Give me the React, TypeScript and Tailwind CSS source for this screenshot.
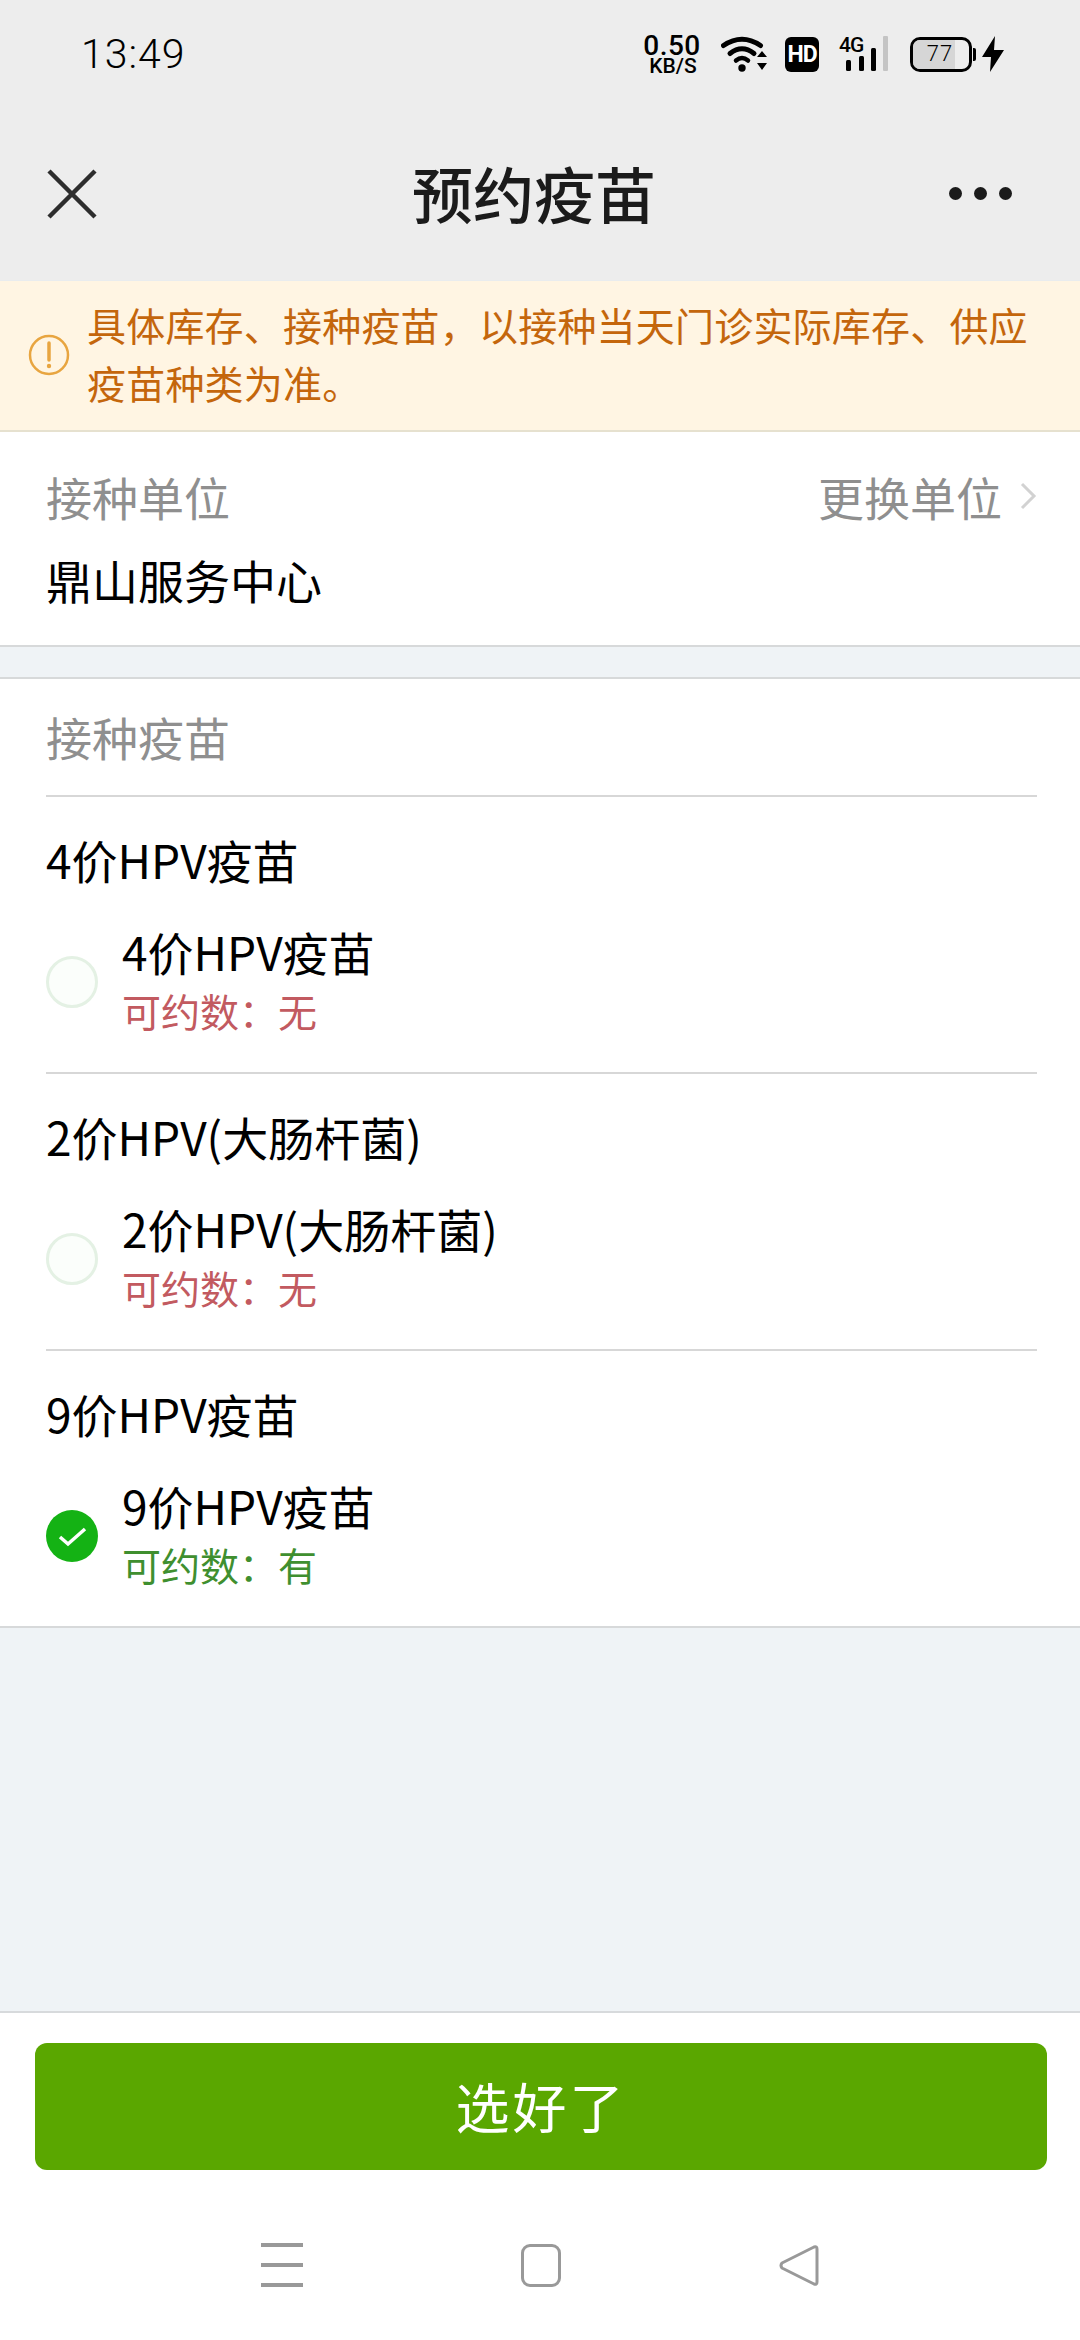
const cjk = "font-['Noto_Sans_CJK_SC','Noto_Sans',sans-serif]"

const VACCINES = [
  { title: "4价HPV疫苗", name: "4价HPV疫苗", available: false },
  { title: "2价HPV(大肠杆菌)", name: "2价HPV(大肠杆菌)", available: false },
  { title: "9价HPV疫苗", name: "9价HPV疫苗", available: true },
]

function StatusBar() {
  return (
    <div className="flex h-[108px] items-center pl-[81px] pr-[76px] text-black">
      <span className="pt-[1px] font-['Roboto',sans-serif] text-[41px] font-light leading-none tracking-[1px]">13:49</span>
      <div className="ml-auto flex items-center">
        <div className="flex w-[60px] flex-col items-center font-['Roboto',sans-serif] font-medium leading-none">
          <span className="text-[28px] leading-[25px] tracking-[0.5px]">0.50</span>
          <span className="pl-[2px] text-[21px] leading-[17px]">KB/S</span>
        </div>
        <svg className="ml-[19px]" width="47" height="36" viewBox="0 0 47 36">
          <path d="M2.5 9.5 Q21 -3 39.5 9.5" fill="none" stroke="#000" strokeWidth="5" strokeLinecap="round" />
          <path d="M9 17.5 Q21 8 33 17.5" fill="none" stroke="#000" strokeWidth="5" strokeLinecap="round" />
          <path d="M15 24.5 Q21 19.5 27 24.5" fill="none" stroke="#000" strokeWidth="4.5" strokeLinecap="round" />
          <circle cx="21" cy="32" r="3.7" fill="#000" />
          <path d="M36 21 L41 15 L46 21 Z M36 27 L41 34 L46 27 Z" fill="#000" />
        </svg>
        <div className="ml-[17px] flex h-[35px] w-[34px] items-center justify-center rounded-[6px] bg-black font-['Roboto',sans-serif] text-[23px] font-bold leading-none tracking-[-1px] text-white">
          HD
        </div>
        <div className="relative ml-[20px] h-[36px] w-[50px]">
          <span className="absolute left-0 top-[-3px] font-['Roboto',sans-serif] text-[21px] font-medium leading-[24px] tracking-[-1px]">4G</span>
          <svg width="50" height="36" viewBox="0 0 50 36">
            <rect x="7" y="24" width="5" height="11" rx="1.5" fill="#000" />
            <rect x="20" y="20" width="5" height="15" rx="1.5" fill="#000" />
            <rect x="32" y="12" width="5" height="23" rx="1.5" fill="#000" />
            <rect x="44" y="0" width="5" height="35" rx="1" fill="#c4c4c4" />
          </svg>
        </div>
        <div className="relative ml-[21px] h-[35px] w-[62px] overflow-hidden rounded-[10px] border-[3px] border-black">
          <div className="h-full w-[75%] bg-[#d6d6d6]" />
          <span className="absolute inset-0 flex items-center justify-center pr-[2px] font-['Roboto',sans-serif] text-[22px] font-light leading-none tracking-[1px] text-black">77</span>
        </div>
        <div className="ml-[1px] h-[13px] w-[3px] rounded-r-[2px] bg-black" />
        <svg className="ml-[6px]" width="22" height="36" viewBox="0 0 22 36">
          <path d="M13 0 L0 21 L9 21 L8 36 L22 14 L12 14 Z" fill="#000" />
        </svg>
      </div>
    </div>
  )
}

function NavBar() {
  return (
    <div className="relative flex h-[172px] items-start justify-between pl-[47px] pr-[68px] pt-[61px]">
      <svg width="50" height="50" viewBox="0 0 50 50">
        <path d="M2 2 L48 48 M48 2 L2 48" stroke="#2d2d2d" strokeWidth="4.5" />
      </svg>
      <h1 className={`absolute left-[412px] top-[50px] text-[61px] font-medium leading-[70px] text-[#1b1b1b] ${cjk}`}>预约疫苗</h1>
      <div className="mt-[18px] flex gap-[12px]">
        <span className="size-[13px] rounded-full bg-[#1b1b1b]" />
        <span className="size-[13px] rounded-full bg-[#1b1b1b]" />
        <span className="size-[13px] rounded-full bg-[#1b1b1b]" />
      </div>
    </div>
  )
}

function Notice() {
  return (
    <div className="flex items-center border-b-2 border-[#e6e1cf] bg-[#fff5e3] pb-[19px] pl-[28px] pr-[28px] pt-[14px]">
      <svg className="mt-[3px] shrink-0" width="42" height="42" viewBox="0 0 42 42">
        <circle cx="21" cy="21" r="19" fill="none" stroke="#e8a540" strokeWidth="2.5" />
        <path d="M21 9 L21 26" stroke="#e8a540" strokeWidth="3.5" strokeLinecap="round" />
        <circle cx="21" cy="32" r="2.2" fill="#e8a540" />
      </svg>
      <p className="ml-[17px] text-[39px] leading-[58px] tracking-[0.2px] text-[#c4660c]">
        具体库存、接种疫苗，以接种当天门诊实际库存、供应疫苗种类为准。
      </p>
    </div>
  )
}

function UnitCard() {
  return (
    <div className="border-b-2 border-[#d7d9da] bg-white pb-[36px] pl-[46px] pr-[43px] pt-[34px]">
      <div className="flex items-center justify-between">
        <span className="text-[46px] leading-[60px] text-[#8f8f8f]">接种单位</span>
        <div className="flex items-center">
          <span className="text-[46px] leading-[60px] text-[#8f8f8f]">更换单位</span>
          <svg className="ml-[18px]" width="17" height="28" viewBox="0 0 17 28">
            <path d="M2 2 L14 14 L2 26" fill="none" stroke="#d2d2d2" strokeWidth="3" />
          </svg>
        </div>
      </div>
      <div className="mt-[23px] text-[46px] leading-[60px] text-black">鼎山服务中心</div>
    </div>
  )
}

function Radio({ checked }: { checked: boolean }) {
  if (checked) {
    return (
      <svg className="mt-[3px] shrink-0" width="52" height="52" viewBox="0 0 52 52">
        <circle cx="26" cy="26" r="26" fill="#14b214" />
        <path d="M14 27 L22 34 L39 19" fill="none" stroke="#fff" strokeWidth="3.5" />
      </svg>
    )
  }
  return <div className="mt-[3px] size-[52px] shrink-0 rounded-full border-[3px] border-[#e4f1e4] bg-[#fbfefb]" />
}

function VaccineCard() {
  return (
    <div className="border-b-2 border-[#d7d9da] bg-white pl-[46px] pr-[43px]">
      <div className="flex h-[118px] items-center border-b-2 border-[#d7d7d7] pb-[2px] text-[46px] text-[#8f8f8f]">接种疫苗</div>
      {VACCINES.map((v, i) => (
        <div
          key={v.title}
          className={`pb-[32px] pt-[32px] ${i < VACCINES.length - 1 ? "border-b-2 border-[#d7d7d7]" : ""}`}
        >
          <div className="text-[46px] leading-[60px] text-black">{v.title}</div>
          <div className="mt-[32px] flex items-center">
            <Radio checked={v.available} />
            <div className="ml-[24px]">
              <div className="text-[46px] leading-[60px] text-black">{v.name}</div>
              <div className={`text-[39px] leading-[59px] ${v.available ? "text-[#3f8f2f]" : "text-[#c25a60]"}`}>
                可约数：{v.available ? "有" : "无"}
              </div>
            </div>
          </div>
        </div>
      ))}
    </div>
  )
}

function BottomBar() {
  return (
    <div className="border-t-2 border-[#d7dadc] bg-white">
      <div className="pl-[35px] pr-[33px] pt-[30px]">
        <button className={`flex h-[127px] w-full items-center justify-center rounded-[12px] bg-[#5aa700] pb-[2px] text-[54px] tracking-[3px] text-white ${cjk}`}>
          选好了
        </button>
      </div>
      <div className="flex h-[170px] items-center pl-[261px] pt-[20px]">
        <div className="flex w-[42px] flex-col gap-[16px]">
          <div className="h-[4px] bg-[#999999]" />
          <div className="h-[4px] bg-[#999999]" />
          <div className="h-[4px] bg-[#999999]" />
        </div>
        <div className="ml-[218px] h-[43px] w-[40px] rounded-[9px] border-[3px] border-[#999999]" />
        <svg className="ml-[218px]" width="40" height="43" viewBox="0 0 40 43">
          <path d="M35 3 Q38 2 38 5 L38 38 Q38 41 35 40 L3 24 Q1 21.5 3 19 Z" fill="none" stroke="#999999" strokeWidth="3" strokeLinejoin="round" />
        </svg>
      </div>
    </div>
  )
}

export default function App() {
  return (
    <div className={`flex min-h-[2340px] flex-col bg-[#eff3f6] ${cjk}`}>
      <div className="bg-[#ededed]">
        <StatusBar />
        <NavBar />
      </div>
      <div className="h-[1px] bg-[#e9ecee]" />
      <Notice />
      <UnitCard />
      <div className="h-[32px] border-b-2 border-[#d7d9da]" />
      <VaccineCard />
      <div className="flex-1" />
      <BottomBar />
    </div>
  )
}
